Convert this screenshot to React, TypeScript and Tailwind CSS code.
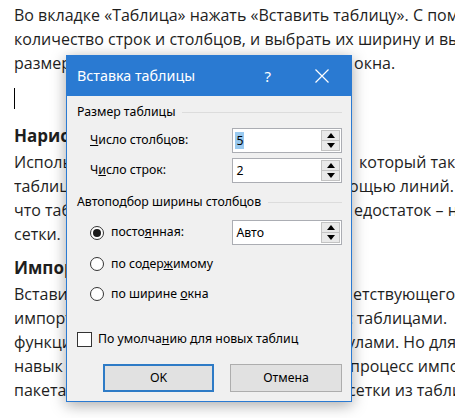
import React from "react";

function Line({
  left,
  right,
  r,
  bold,
}: {
  left: string;
  right?: string;
  r?: string;
  bold?: boolean;
}) {
  return (
    <div
      className={
        "flex h-[24px] items-center whitespace-nowrap leading-[24px] " +
        (bold ? "font-bold text-[17px]" : "")
      }
    >
      <span className={"shrink-0 overflow-hidden " + (right ? "w-[338px]" : "")}>{left}</span>
      {right ? <span className={"shrink-0 " + (r ?? "")}>{right}</span> : null}
    </div>
  );
}

function Arrow({ up }: { up?: boolean }) {
  return (
    <svg width="8" height="5" viewBox="0 0 8 5">
      {up ? (
        <polygon points="0,5 8,5 4,0" fill="#000" />
      ) : (
        <polygon points="0,0 8,0 4,5" fill="#000" />
      )}
    </svg>
  );
}

function Spin({ value, selected }: { value: string; selected?: boolean }) {
  return (
    <div className="flex h-[25px] w-[110px] items-center border border-[#abadb3] bg-white pl-[2px] pr-[1px]">
      <div className="flex-1 leading-[16px]">
        <span className={selected ? "bg-[#99c9ef] px-[1px]" : "px-[1px]"}>{value}</span>
      </div>
      <div className="flex h-[21px] w-[19px] flex-col">
        <div className="flex flex-1 items-center justify-center border border-[#c3c3c3] bg-[#e9e9e9]">
          <Arrow up />
        </div>
        <div className="flex flex-1 items-center justify-center border border-t-0 border-[#c3c3c3] bg-[#e9e9e9]">
          <Arrow />
        </div>
      </div>
    </div>
  );
}

function Radio({ checked }: { checked?: boolean }) {
  return (
    <div className="flex h-[14px] w-[14px] items-center justify-center rounded-full border border-[#333] bg-white">
      {checked ? <div className="h-[8px] w-[8px] rounded-full bg-[#1a1a1a]" /> : null}
    </div>
  );
}

function Group({ label }: { label: string }) {
  return (
    <div className="flex h-[16px] items-center gap-[7px]">
      <span className="leading-[16px]">{label}</span>
      <div className="h-px flex-1 bg-[#dcdcdc]" />
    </div>
  );
}

export default function App() {
  return (
    <div
      className="relative h-[418px] w-[455px] overflow-hidden bg-white text-[16px] text-[#1e1e1e]"
      style={{ fontFamily: '"Open Sans", "Noto Sans", sans-serif' }}
    >
      <div className="pl-[14px] pt-[3px]">
        <Line left="Во вкладке «Таблица» нажать «Вставить таблицу». С помощью окна задать" />
        <Line left="количество строк и столбцов, и выбрать их ширину и высоту, задав" />
        <Line left="размер ячеек вручную, по содержимому или по ширине " right="окна." r="ml-[2px]" />
        <div className="mt-[11px] flex h-[24px] items-center">
          <div className="h-[21px] w-px bg-black" />
        </div>
        <div className="mt-[14px]">
          <Line left="Нарисовать таблицу" bold />
        </div>
        <div className="mt-[2px]">
          <Line left="Использовать инструмент «Нарисовать таблицу»," right="который также" r="ml-[7px]" />
          <Line left="таблицу произвольной формы с пом" right="ощью линий. Удобно" r="-ml-[3px]" />
          <Line left="что таблица рисуется вручную. Н" right="едостаток – нет" r="ml-[2px]" />
          <Line left="сетки." />
        </div>
        <div className="mt-[10px]">
          <Line left="Импортировать таблицу" bold />
        </div>
        <div className="mt-[2px]">
          <Line left="Вставить таблицу Excel с помощью соотв" right="етствующего" r="ml-[1px]" />
          <Line left="импорт таблиц облегчает работу" right="с таблицами." r="-ml-[7px]" />
          <Line left="функции Excel для работы с форм" right="улами. Но для" r="-ml-[5px]" />
          <Line left="навык работы с Excel, что упрощает" right="процесс импорта" r="-ml-[2px]" />
          <Line left="пакета и перенос данных и" right="сетки из таблицы" r="-ml-[4px]" />
        </div>
      </div>

      {/* Dialog */}
      <div
        className="absolute left-[66px] top-[55px] flex h-[347px] w-[286px] flex-col border border-[#2a7ad2] bg-[#f0f0f0] text-[12.3px] text-black shadow-[0_3px_14px_rgba(0,0,0,0.35)]"
        style={{ fontFamily: '"Noto Sans", "Open Sans", sans-serif' }}
      >
        <div className="flex h-[40px] shrink-0 items-center bg-[#2a7ad2] pl-[10px] text-white">
          <span className="flex-1 text-[14.3px]">Вставка таблицы</span>
          <span className="mr-[44px] text-[15px]">?</span>
          <svg width="14" height="14" viewBox="0 0 14 14" className="mr-[22px]">
            <path d="M0.5 0.5 L13.5 13.5 M13.5 0.5 L0.5 13.5" stroke="#fff" strokeWidth="1.2" />
          </svg>
        </div>
        <div className="flex flex-1 flex-col pl-[10px] pr-[9px] pt-[8px]">
          <Group label="Размер таблицы" />
          <div className="mt-[8px] flex items-center">
            <span className="w-[156px] pl-[13px]">
              <u>Ч</u>исло столбцов:
            </span>
            <Spin value="5" selected />
          </div>
          <div className="mt-[5px] flex items-center">
            <span className="w-[156px] pl-[13px]">
              Ч<u>и</u>сло строк:
            </span>
            <Spin value="2" />
          </div>
          <div className="mt-[11px]">
            <Group label="Автоподбор ширины столбцов" />
          </div>
          <div className="mt-[10px] flex items-center">
            <div className="flex w-[156px] items-center gap-[7px] pl-[13px]">
              <Radio checked />
              <span>
                посто<u>я</u>нная:
              </span>
            </div>
            <Spin value="Авто" />
          </div>
          <div className="mt-[9px] flex h-[20px] items-center gap-[7px] pl-[13px]">
            <Radio />
            <span>
              по содер<u>ж</u>имому
            </span>
          </div>
          <div className="mt-[10px] flex h-[20px] items-center gap-[7px] pl-[13px]">
            <Radio />
            <span>
              по ширине <u>о</u>кна
            </span>
          </div>
          <div className="mt-[27px] flex h-[16px] items-center gap-[6px]">
            <div className="h-[15px] w-[15px] border border-[#333] bg-white" />
            <span>
              По умолча<u>н</u>ию для новых таблиц
            </span>
          </div>
          <div className="mt-[17px] flex gap-[16px] pl-[26px]">
            <button className="flex h-[28px] w-[111px] items-center justify-center border-2 border-[#2e7bc6] bg-[#e1e1e1]">
              OK
            </button>
            <button className="flex h-[28px] w-[112px] items-center justify-center border border-[#adadad] bg-[#e1e1e1]">
              Отмена
            </button>
          </div>
        </div>
      </div>
    </div>
  );
}
